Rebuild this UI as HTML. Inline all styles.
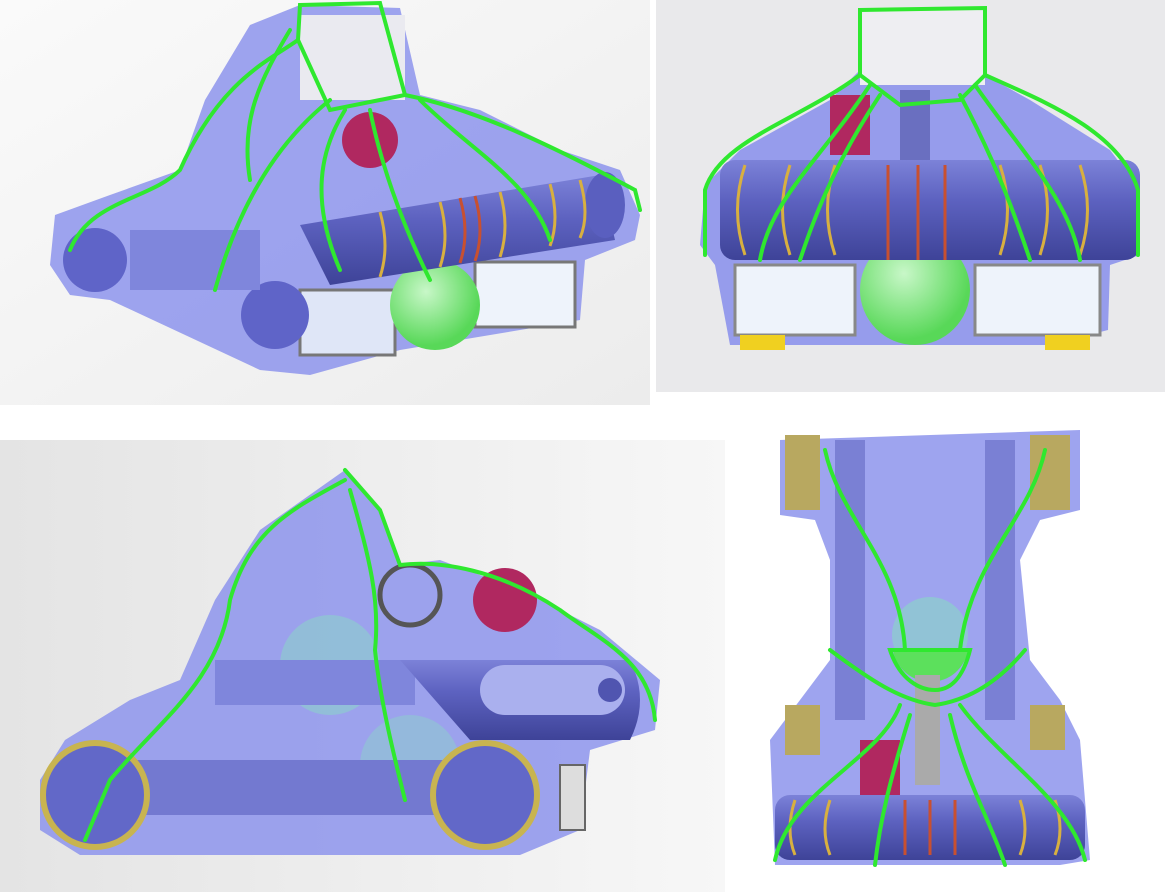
<!DOCTYPE html>
<html><head><meta charset="utf-8"><style>
html,body{margin:0;padding:0;background:#fff;width:1165px;height:892px;overflow:hidden}
svg{display:block}
</style></head><body>
<svg width="1165" height="892" viewBox="0 0 1165 892" xmlns="http://www.w3.org/2000/svg">
<defs>
<linearGradient id="bg1" x1="0" y1="0" x2="1" y2="1"><stop offset="0" stop-color="#fafafa"/><stop offset="1" stop-color="#ececec"/></linearGradient>
<linearGradient id="bg3" x1="0" y1="0" x2="1" y2="0"><stop offset="0" stop-color="#e4e4e4"/><stop offset="1" stop-color="#f7f7f7"/></linearGradient>
<linearGradient id="rol" x1="0" y1="0" x2="0" y2="1"><stop offset="0" stop-color="#7c82d8"/><stop offset="0.4" stop-color="#5d62c0"/><stop offset="1" stop-color="#3e4398"/></linearGradient>
<radialGradient id="ball" cx="0.4" cy="0.35" r="0.6"><stop offset="0" stop-color="#c8f7c8"/><stop offset="1" stop-color="#58d858"/></radialGradient>
</defs>
<rect width="1165" height="892" fill="#fff"/>
<rect x="0" y="0" width="650" height="405" fill="url(#bg1)"/>
<rect x="656" y="0" width="509" height="392" fill="#e9e9eb"/>
<rect x="0" y="440" width="725" height="452" fill="url(#bg3)"/>

<!-- TOP LEFT -->
<g>
<path d="M50 265 L55 215 L110 195 L180 170 L205 100 L250 25 L300 5 L400 8 L420 95 L480 110 L560 150 L620 170 L640 215 L635 240 L585 260 L580 320 L400 350 L310 375 L260 370 L110 300 L70 295 Z" fill="#8d94ec" opacity="0.85"/>
<rect x="300" y="290" width="95" height="65" fill="#dfe6f7" stroke="#777" stroke-width="3"/>
<rect x="475" y="262" width="100" height="65" fill="#eef3fb" stroke="#777" stroke-width="3"/>
<circle cx="435" cy="305" r="45" fill="url(#ball)"/>
<path d="M300 225 L600 175 L615 240 L330 285 Z" fill="url(#rol)"/>
<ellipse cx="605" cy="205" rx="20" ry="33" fill="#5a5fbf"/>
<g stroke="#d8b040" stroke-width="3" fill="none"><path d="M380 212 q10 35 0 65"/><path d="M440 202 q10 35 0 65"/><path d="M500 192 q10 35 0 65"/><path d="M550 184 q10 35 0 62"/><path d="M580 180 q10 35 0 58"/></g>
<g stroke="#c85030" stroke-width="3" fill="none"><path d="M460 198 q10 35 0 65"/><path d="M475 196 q10 35 0 65"/></g>
<rect x="300" y="15" width="105" height="85" fill="#eaeaf0"/>
<circle cx="370" cy="140" r="28" fill="#b02860"/>
<circle cx="95" cy="260" r="32" fill="#5f64c8"/>
<circle cx="275" cy="315" r="34" fill="#5f64c8"/>
<rect x="130" y="230" width="130" height="60" fill="#7f86dc"/>
<g stroke="#2fe82f" stroke-width="4" fill="none" stroke-linecap="round">
<path d="M300 5 L380 3 L405 95 L330 110 L298 40 Z"/>
<path d="M298 40 C270 60 220 80 180 170 C150 200 90 200 70 250"/>
<path d="M330 100 C280 140 240 200 215 290"/>
<path d="M345 110 C320 150 310 200 340 270"/>
<path d="M370 110 C380 160 400 220 430 280"/>
<path d="M405 95 C480 110 560 150 635 190 L640 210"/>
<path d="M420 100 C470 150 530 180 550 240"/>
<path d="M290 30 C260 80 240 120 250 180"/>
</g>
</g>

<!-- TOP RIGHT -->
<g>
<path d="M700 245 L705 185 L740 150 L830 100 L860 70 L858 10 L985 8 L985 75 L1030 100 L1110 150 L1140 190 L1140 255 L1110 265 L1108 330 L1050 345 L730 345 L715 265 Z" fill="#8d94ec" opacity="0.9"/>
<rect x="860" y="10" width="125" height="75" fill="#eeeef2"/>
<rect x="830" y="95" width="40" height="60" fill="#b02860"/>
<rect x="900" y="90" width="30" height="70" fill="#6a6fc0"/>
<rect x="735" y="265" width="120" height="70" fill="#eef3fb" stroke="#888" stroke-width="3"/>
<rect x="975" y="265" width="125" height="70" fill="#eef3fb" stroke="#888" stroke-width="3"/>
<circle cx="915" cy="290" r="55" fill="url(#ball)"/>
<rect x="720" y="160" width="420" height="100" rx="15" fill="url(#rol)"/>
<g stroke="#d8b040" stroke-width="3" fill="none"><path d="M745 165 q-15 45 0 90"/><path d="M790 165 q-15 45 0 90"/><path d="M835 165 q-15 45 0 90"/><path d="M1000 165 q15 45 0 90"/><path d="M1040 165 q15 45 0 90"/><path d="M1080 165 q15 45 0 90"/></g>
<g stroke="#c85030" stroke-width="3" fill="none"><path d="M888 165 v95"/><path d="M918 165 v95"/><path d="M945 165 v95"/></g>
<rect x="740" y="335" width="45" height="15" fill="#f0d020"/><rect x="1045" y="335" width="45" height="15" fill="#f0d020"/>
<g stroke="#2fe82f" stroke-width="4" fill="none" stroke-linecap="round">
<path d="M860 10 L985 8 L985 75 L960 100 L900 105 L860 75 Z"/>
<path d="M860 75 C800 120 720 140 705 190 L705 255"/>
<path d="M985 75 C1040 100 1120 130 1138 190 L1138 255"/>
<path d="M870 85 C820 160 770 200 760 260"/>
<path d="M880 95 C830 170 810 230 800 260"/>
<path d="M960 95 C1000 170 1020 230 1030 260"/>
<path d="M975 85 C1020 150 1070 200 1080 260"/>
</g>
</g>

<!-- BOTTOM LEFT -->
<g>
<path d="M40 830 L40 780 L65 740 L130 700 L180 680 L215 600 L260 530 L345 470 L380 510 L400 565 L440 560 L520 590 L600 630 L660 680 L655 730 L590 750 L580 830 L520 855 L140 855 L80 855 Z" fill="#8d94ec" opacity="0.85"/>
<circle cx="330" cy="665" r="50" fill="#8cd0cc" opacity="0.6"/>
<circle cx="410" cy="765" r="50" fill="#8cd0cc" opacity="0.5"/>
<rect x="215" y="660" width="200" height="45" fill="#7f86dc"/>
<rect x="120" y="760" width="380" height="55" fill="#7379d0"/>
<path d="M400 660 L630 660 Q650 700 630 740 L470 740 Z" fill="url(#rol)"/>
<rect x="480" y="665" width="145" height="50" rx="25" fill="#aab0ee"/>
<circle cx="610" cy="690" r="12" fill="#5055b0"/>
<circle cx="505" cy="600" r="32" fill="#b02860"/>
<circle cx="410" cy="595" r="30" fill="none" stroke="#555" stroke-width="5"/>
<circle cx="95" cy="795" r="52" fill="#6268c8" stroke="#c8b450" stroke-width="6"/>
<circle cx="485" cy="795" r="52" fill="#6268c8" stroke="#c8b450" stroke-width="6"/>
<rect x="560" y="765" width="25" height="65" fill="#ddd" stroke="#666" stroke-width="2"/>
<g stroke="#2fe82f" stroke-width="4" fill="none" stroke-linecap="round">
<path d="M345 470 L380 510 L400 565 C440 560 500 570 560 610 C600 640 650 660 655 720"/>
<path d="M345 480 C290 510 250 530 230 600 C220 680 160 720 110 780 L85 840"/>
<path d="M350 490 C370 560 380 600 375 650 C380 700 395 760 405 800"/>
</g>
</g>

<!-- BOTTOM RIGHT -->
<g>
<path d="M780 440 L1080 430 L1080 510 L1040 520 L1020 560 L1030 660 L1060 700 L1080 740 L1090 860 L1060 865 L775 865 L770 740 L800 700 L830 660 L830 560 L815 520 L780 515 Z" fill="#8d94ec" opacity="0.85"/>
<rect x="785" y="435" width="35" height="75" fill="#b8a860"/>
<rect x="1030" y="435" width="40" height="75" fill="#b8a860"/>
<rect x="785" y="705" width="35" height="50" fill="#b8a860"/>
<rect x="1030" y="705" width="35" height="45" fill="#b8a860"/>
<rect x="835" y="440" width="30" height="280" fill="#7a80d4"/>
<rect x="985" y="440" width="30" height="280" fill="#7a80d4"/>
<circle cx="930" cy="635" r="38" fill="#8cd0cc" opacity="0.7"/>
<path d="M893 650 h75 a38 38 0 0 1 -75 0z" fill="#5ce05c"/>
<rect x="915" y="675" width="25" height="110" fill="#aaa"/>
<rect x="860" y="740" width="40" height="55" fill="#b02860"/>
<rect x="775" y="795" width="310" height="65" rx="15" fill="url(#rol)"/>
<g stroke="#d8b040" stroke-width="3" fill="none"><path d="M795 800 q-10 30 0 55"/><path d="M830 800 q-10 30 0 55"/><path d="M1020 800 q10 30 0 55"/><path d="M1055 800 q10 30 0 55"/></g>
<g stroke="#c85030" stroke-width="3" fill="none"><path d="M905 800 v55"/><path d="M930 800 v55"/><path d="M955 800 v55"/></g>
<g stroke="#2fe82f" stroke-width="4" fill="none" stroke-linecap="round">
<path d="M830 650 C870 680 900 700 935 705 C970 700 1000 680 1025 650"/>
<path d="M890 650 C900 680 920 690 935 690 C955 690 965 670 970 650 Z"/>
<path d="M825 450 C840 520 900 560 905 650"/>
<path d="M1045 450 C1030 520 970 560 960 650"/>
<path d="M900 705 C880 760 790 790 775 860"/>
<path d="M910 715 C890 780 880 820 875 865"/>
<path d="M950 715 C965 780 990 820 1005 865"/>
<path d="M960 705 C1000 760 1070 800 1085 860"/>
</g>
</g>
</svg>
</body></html>
